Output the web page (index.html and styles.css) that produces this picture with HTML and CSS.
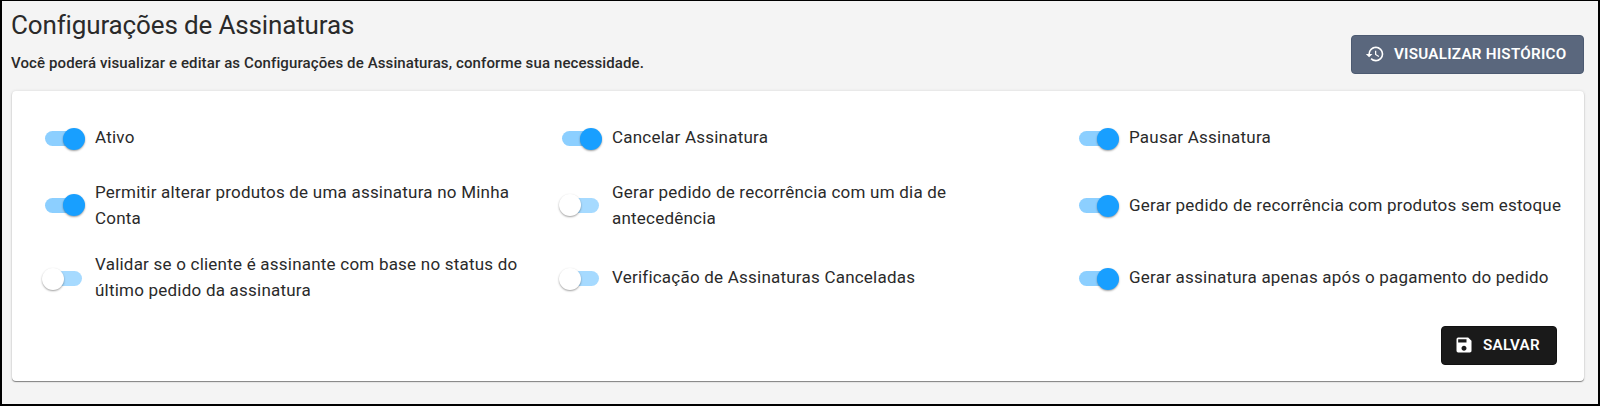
FILE: index.html
```html
<!DOCTYPE html>
<html lang="pt-BR">
<head>
<meta charset="utf-8">
<title>Configurações de Assinaturas</title>
<link rel="stylesheet" href="styles.css">
</head>
<body>
<main class="page">
  <header class="header">
    <div>
      <h1 class="title"><span>Configurações de Assinaturas</span></h1>
      <p class="subtitle"><span>Você poderá visualizar e editar as Configurações de Assinaturas, conforme sua necessidade.</span></p>
    </div>
    <button class="btn btn-history">
      <svg class="icon" viewBox="0 0 24 24"><path d="M13 3a9 9 0 0 0-9 9H1l3.89 3.89.07.14L9 12H6c0-3.87 3.13-7 7-7s7 3.13 7 7-3.13 7-7 7c-1.93 0-3.68-.79-4.94-2.06l-1.42 1.42A8.954 8.954 0 0 0 13 21a9 9 0 0 0 0-18zm-1 5v5l4.28 2.54.72-1.21-3.5-2.08V8H12z"/></svg>
      <span>VISUALIZAR HISTÓRICO</span>
    </button>
  </header>
  <section class="card">
    <div class="grid">
      <label class="option"><span class="switch on"></span><span class="label">Ativo</span></label>
      <label class="option"><span class="switch on"></span><span class="label">Cancelar Assinatura</span></label>
      <label class="option"><span class="switch on"></span><span class="label">Pausar Assinatura</span></label>
      <label class="option"><span class="switch on raised"></span><span class="label">Permitir alterar produtos de uma assinatura no Minha<br>Conta</span></label>
      <label class="option"><span class="switch raised"></span><span class="label">Gerar pedido de recorrência com um dia de<br>antecedência</span></label>
      <label class="option"><span class="switch on"></span><span class="label">Gerar pedido de recorrência com produtos sem estoque</span></label>
      <label class="option"><span class="switch"></span><span class="label">Validar se o cliente é assinante com base no status do<br>último pedido da assinatura</span></label>
      <label class="option"><span class="switch"></span><span class="label">Verificação de Assinaturas Canceladas</span></label>
      <label class="option"><span class="switch on"></span><span class="label">Gerar assinatura apenas após o pagamento do pedido</span></label>
    </div>
    <div class="actions">
      <button class="btn btn-save">
        <svg class="icon" viewBox="0 0 24 24"><path d="M17 3H5a2 2 0 0 0-2 2v14a2 2 0 0 0 2 2h14c1.1 0 2-.9 2-2V7l-4-4zm-5 16c-1.66 0-3-1.34-3-3s1.34-3 3-3 3 1.34 3 3-1.34 3-3 3zm3-10H5V5h10v4z"/></svg>
        <span>SALVAR</span>
      </button>
    </div>
  </section>
</main>
</body>
</html>
```
FILE: styles.css
```css
* { box-sizing: border-box; }
body {
  margin: 0;
  font-family: Roboto, "Liberation Sans", sans-serif;
  color: #2a2a2a;
}
.page {
  height: 406px;
  padding: 7px 14px 0 9px;
  background: #f4f4f4;
  border: 2px solid #000;
  border-top-width: 1px;
}
.header {
  display: flex;
  justify-content: space-between;
  height: 83px;
}
.title {
  margin: 0;
  font-size: 26px;
  font-weight: 400;
  line-height: 34px;
  letter-spacing: -.14px;
}
.subtitle {
  margin: 10px 0 0;
  font-size: 15px;
  font-weight: 500;
  line-height: 22px;
  letter-spacing: .11px;
}
.btn {
  display: flex;
  align-items: center;
  height: 39px;
  padding: 0 0 1px 13px;
  border: 1px solid;
  border-radius: 4px;
  color: #fff;
  font: 600 15.2px/24px Roboto, "Liberation Sans", sans-serif;
  letter-spacing: .26px;
  white-space: nowrap;
}
.icon {
  width: 20px;
  height: 20px;
  margin-right: 9px;
  fill: currentColor;
}
.btn-history {
  width: 233px;
  margin-top: 27px;
  background: #5a677d;
  border-color: #4c5a71;
}
.btn-save {
  width: 116px;
  padding-left: 12px;
  background: #1a1a1a;
  border-color: #111;
}
.card {
  height: 290px;
  margin-left: 1px;
  padding: 28px 27px 0 33px;
  background: #fff;
  border-radius: 4px;
  box-shadow: 0 1px 1px rgba(0, 0, 0, .45), 0 0 3px rgba(0, 0, 0, .12);
}
.grid {
  display: grid;
  grid-template-columns: 517px 517px auto;
  grid-template-rows: 36px 54px 46px;
  row-gap: 22.5px;
}
.option {
  display: flex;
  align-items: center;
}
.label {
  font-size: 17px;
  line-height: 26px;
  letter-spacing: .22px;
  white-space: nowrap;
}
.switch {
  position: relative;
  top: 1px;
  flex: none;
  width: 37px;
  height: 15px;
  margin-right: 13px;
  border-radius: 8px;
  background: #a6daff;
}
.switch.on { background: #8ccfff; }
.switch::after {
  content: "";
  position: absolute;
  top: -3px;
  left: -3px;
  width: 22px;
  height: 22px;
  border-radius: 50%;
  background: #fff;
  box-shadow: 0 1px 2px rgba(0, 0, 0, .38);
}
.switch.on::after {
  left: 18px;
  background: #189fff;
}
.switch.raised::after { top: -4px; }
.actions {
  display: flex;
  justify-content: flex-end;
  margin-top: 26px;
}
```
